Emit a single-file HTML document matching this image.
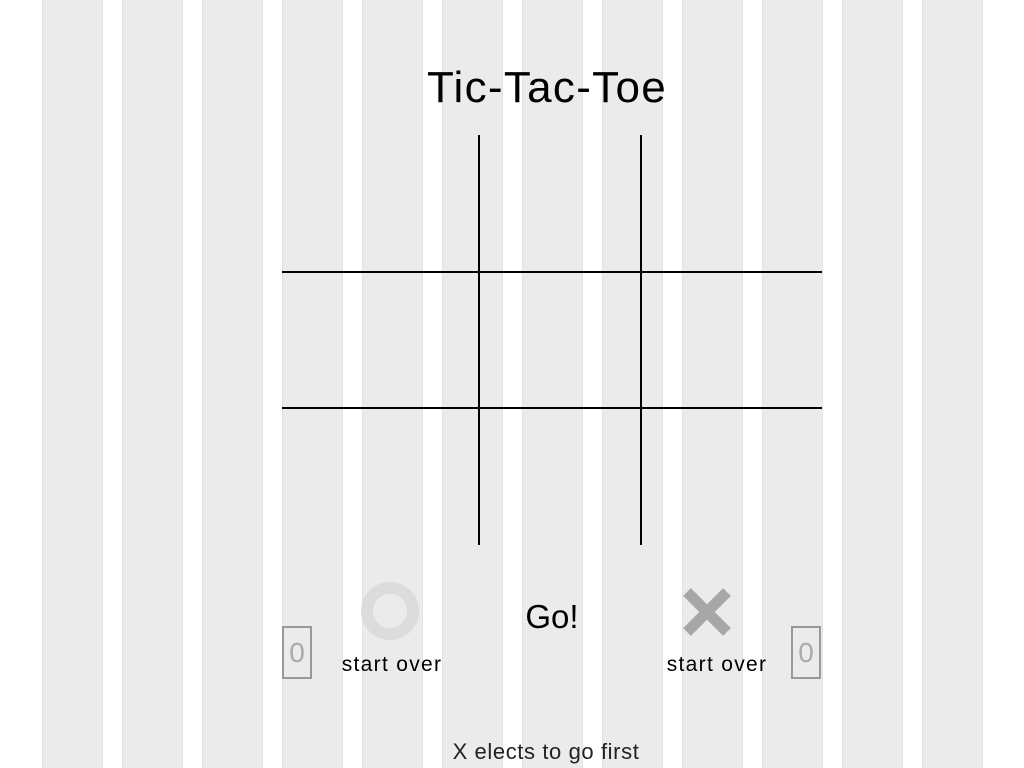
<!DOCTYPE html>
<html><head><meta charset="utf-8"><style>
html,body{margin:0;padding:0;background:#fff;width:1024px;height:768px;overflow:hidden;position:relative;font-family:"Liberation Sans",sans-serif}
.col{position:absolute;top:0;width:61px;height:768px;background:#ebebeb;border-left:1px solid #e2e2e2;border-right:1px solid #e2e2e2;box-sizing:border-box}
.t{position:absolute;white-space:nowrap;color:#000}
.ln{position:absolute;background:#000}
.box{position:absolute;width:30px;height:53px;border:2px solid #999;box-sizing:border-box;color:#aaa;font-size:28px;text-align:center;line-height:49px;font-weight:300}
</style></head><body>
<div class="col" style="left:42px"></div><div class="col" style="left:122px"></div><div class="col" style="left:202px"></div><div class="col" style="left:282px"></div><div class="col" style="left:362px"></div><div class="col" style="left:442px"></div><div class="col" style="left:522px"></div><div class="col" style="left:602px"></div><div class="col" style="left:682px"></div><div class="col" style="left:762px"></div><div class="col" style="left:842px"></div><div class="col" style="left:922px"></div>

<div class="t" style="left:418px;top:63px;width:258px;text-align:center;font-size:44px;letter-spacing:1.3px">Tic-Tac-Toe</div>

<div class="ln" style="left:478px;top:135px;width:2px;height:410px"></div>
<div class="ln" style="left:640px;top:135px;width:2px;height:410px"></div>
<div class="ln" style="left:282px;top:271px;width:540px;height:2px"></div>
<div class="ln" style="left:282px;top:407px;width:540px;height:2px"></div>

<svg style="position:absolute;left:0;top:0" width="1024" height="768">
<circle cx="390" cy="611" r="23" fill="none" stroke="#dcdcdc" stroke-width="12"/>
<g stroke="#a6a8a6" stroke-width="11"><line x1="687" y1="592" x2="727" y2="632"/><line x1="727" y1="592" x2="687" y2="632"/></g>
</svg>

<div class="box" style="left:282px;top:626px">0</div>
<div class="box" style="left:791px;top:626px">0</div>

<div class="t" style="left:330px;top:653px;width:124px;text-align:center;font-size:21px;letter-spacing:1.3px">start over</div>
<div class="t" style="left:655px;top:653px;width:124px;text-align:center;font-size:21px;letter-spacing:1.3px">start over</div>
<div class="t" style="left:512px;top:598px;width:80px;text-align:center;font-size:33px">Go!</div>
<div class="t" style="left:420px;top:739px;width:252px;text-align:center;font-size:22px;color:#222;letter-spacing:0.6px">X elects to go first</div>
</body></html>
